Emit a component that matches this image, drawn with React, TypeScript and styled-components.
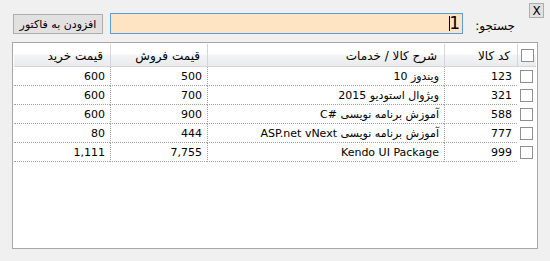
import React from "react";
import styled, { createGlobalStyle } from "styled-components";

const GlobalStyle = createGlobalStyle`
  html, body {
    margin: 0;
    padding: 0;
    background: #f0f0f0;
  }
  body {
    font-family: Tahoma, "DejaVu Sans", sans-serif;
    font-size: 11px;
    color: #000;
  }
`;

const Page = styled.div`
  direction: rtl;
  width: 550px;
  height: 261px;
  background: #f0f0f0;
  box-sizing: border-box;
  overflow: hidden;
`;

const TopBar = styled.div`
  display: flex;
  align-items: flex-start;
  padding: 3px 6px 0 13px;
`;

const WinButton = styled.button`
  box-sizing: border-box;
  border: 1px solid #adadad;
  background: #e1e1e1;
  font-family: Tahoma, "DejaVu Sans", sans-serif;
  font-size: 11px;
  color: #000;
  padding: 0;
  margin: 0;
  display: flex;
  align-items: center;
  justify-content: center;
`;

const CloseButton = styled(WinButton)`
  width: 15px;
  height: 15px;
  font-size: 12px;
  line-height: 1;
  font-family: "DejaVu Sans", sans-serif;
`;

const SearchRow = styled.div`
  flex: 1;
  display: flex;
  align-items: center;
  margin-top: 10px;
  height: 21px;
`;

const SearchLabel = styled.label`
  flex: 1;
  padding-right: 14px;
  padding-top: 4px;
  white-space: nowrap;
  font-size: 12px;
`;

const SearchInput = styled.div`
  box-sizing: border-box;
  width: 353px;
  height: 21px;
  background: #ffe4c4;
  border: 1px solid #5b9be0;
  display: flex;
  align-items: center;
  padding-right: 2px;
  font-family: "DejaVu Sans", sans-serif;
  font-size: 17px;
  line-height: 1;
`;

const Caret = styled.span`
  display: inline-block;
  width: 1px;
  height: 15px;
  background: #000;
  margin-right: -1px;
`;

const AddButton = styled(WinButton)`
  width: 90px;
  height: 20px;
  margin-right: 7px;
  padding-top: 1px;
`;

const Grid = styled.div`
  box-sizing: border-box;
  margin: 8px 12px 0 12px;
  height: 207px;
  border: 1px solid #a7a7ab;
  background: #fff;
  padding: 1px;
`;

const COLS = "19px 73px 237px 97px 96px";

const HeaderRow = styled.div`
  display: grid;
  grid-template-columns: ${COLS};
  height: 23px;
  box-sizing: border-box;
  border-bottom: 1px solid #d5d5d5;
  background: linear-gradient(#ffffff 0%, #ffffff 45%, #f3f4f6 50%, #eaebee 100%);
`;

const HeaderCell = styled.div<{ $last?: boolean }>`
  box-sizing: border-box;
  border-left: ${(p) => (p.$last ? "none" : "1px solid #d5d5d5")};
  display: flex;
  align-items: center;
  justify-content: flex-start;
  padding-right: 7px;
  padding-top: 1px;
  white-space: nowrap;
  font-size: 12px;
`;

const CheckHeaderCell = styled.div`
  box-sizing: border-box;
  border-left: 1px solid #d5d5d5;
  display: flex;
  align-items: center;
  justify-content: center;
`;

const Row = styled.div`
  display: grid;
  grid-template-columns: ${COLS};
  height: 19px;
`;

const Cell = styled.div<{ $last?: boolean }>`
  box-sizing: border-box;
  border-bottom: 1px dotted #a0a0a0;
  border-left: ${(p) => (p.$last ? "none" : "1px dotted #a0a0a0")};
  display: flex;
  align-items: center;
  padding-right: 5px;
  white-space: nowrap;
  overflow: hidden;
`;

const CheckCell = styled.div`
  display: flex;
  align-items: center;
  justify-content: center;
`;

const Box = styled.span`
  box-sizing: border-box;
  display: inline-block;
  width: 13px;
  height: 13px;
  border: 1px solid #8e8f8f;
  background: #fff;
`;

const rows = [
  { code: "123", desc: "ویندوز 10", sale: "500", buy: "600" },
  { code: "321", desc: "ویژوال استودیو 2015", sale: "700", buy: "600" },
  { code: "588", desc: "آموزش برنامه نویسی  #C", sale: "900", buy: "600" },
  { code: "777", desc: "آموزش برنامه نویسی ASP.net vNext", sale: "444", buy: "80" },
  { code: "999", desc: "Kendo UI Package", sale: "7,755", buy: "1,111" },
];

export default function App() {
  return (
    <>
      <GlobalStyle />
      <Page>
        <TopBar>
          <CloseButton>X</CloseButton>
          <SearchRow>
            <SearchLabel>جستجو:</SearchLabel>
            <SearchInput>
              <span>1</span>
              <Caret />
            </SearchInput>
            <AddButton>افزودن به فاکتور</AddButton>
          </SearchRow>
        </TopBar>
        <Grid>
          <HeaderRow>
            <CheckHeaderCell>
              <Box />
            </CheckHeaderCell>
            <HeaderCell>کد کالا</HeaderCell>
            <HeaderCell>شرح کالا / خدمات</HeaderCell>
            <HeaderCell>قیمت فروش</HeaderCell>
            <HeaderCell $last>قیمت خرید</HeaderCell>
          </HeaderRow>
          {rows.map((r) => (
            <Row key={r.code}>
              <CheckCell>
                <Box />
              </CheckCell>
              <Cell>{r.code}</Cell>
              <Cell>{r.desc}</Cell>
              <Cell>{r.sale}</Cell>
              <Cell $last>{r.buy}</Cell>
            </Row>
          ))}
        </Grid>
      </Page>
    </>
  );
}
